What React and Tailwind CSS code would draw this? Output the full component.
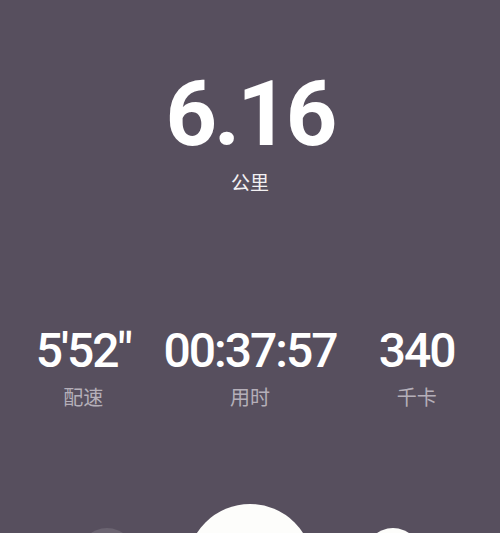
const STATS = [
  { value: "5'52\"", label: "配速" },
  { value: "00:37:57", label: "用时" },
  { value: "340", label: "千卡" },
];

const NUM_FONT = "font-['Roboto','DejaVu_Sans',sans-serif]";
const CJK_FONT = "font-['Noto_Sans_CJK_SC','Noto_Sans',sans-serif]";

export default function App() {
  return (
    <div className="w-full h-[533px] overflow-hidden bg-[#574f5e] flex flex-col items-center">
      {/* Distance */}
      <div className={`pt-[70px] text-[90px] leading-none font-bold text-white tracking-[-3px] ${NUM_FONT}`}>
        6.16
      </div>
      <div className={`mt-[12px] text-[19px] leading-none text-[#f3f1f3] ${CJK_FONT}`}>
        公里
      </div>

      {/* Stats */}
      <div className="mt-[136px] w-full grid grid-cols-3">
        {STATS.map((s) => (
          <div key={s.label} className="flex flex-col items-center">
            <div className={`text-[48px] leading-none font-medium text-white tracking-[-2px] ${NUM_FONT}`}>
              {s.value}
            </div>
            <div className={`mt-[12px] text-[20px] leading-none text-[#b5afb9] ${CJK_FONT}`}>
              {s.label}
            </div>
          </div>
        ))}
      </div>

      {/* Controls */}
      <div className="mt-[97px] flex items-start justify-center gap-[52px]">
        <div className="mt-[24px] w-[56px] h-[56px] rounded-full bg-[#6b6471]" />
        <div className="w-[126px] h-[126px] rounded-full bg-[#fdfdfb]" />
        <div className="mt-[24px] w-[56px] h-[56px] rounded-full bg-[#fdfdfb]" />
      </div>
    </div>
  );
}
